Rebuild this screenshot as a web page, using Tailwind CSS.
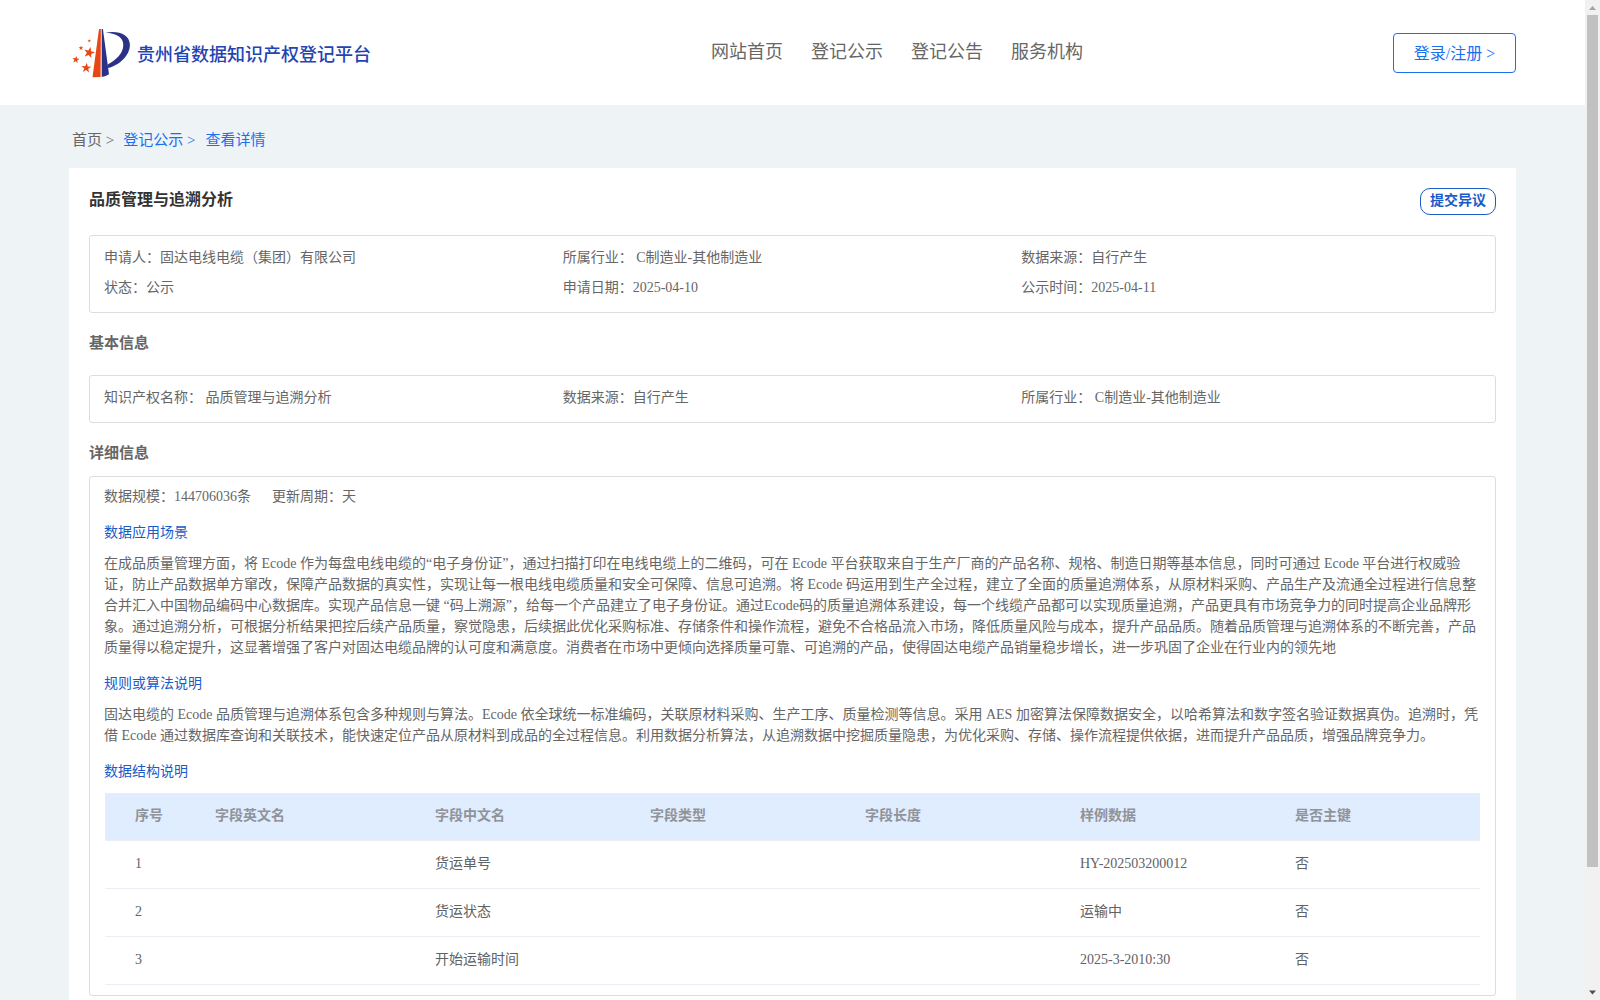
<!DOCTYPE html>
<html lang="zh-CN">
<head>
  <meta charset="UTF-8" />
  <meta name="viewport" content="width=device-width, initial-scale=1.0" />
  <title>贵州省数据知识产权登记平台</title>
  <script src="https://cdn.jsdelivr.net/npm/@tailwindcss/browser@4"></script>
</head>
<body class="h-[1000px] overflow-hidden bg-[#eef3f6] flex font-['Liberation_Serif','Noto_Sans_CJK_SC',serif] text-sm text-[#666]">
  <div class="w-[1585px] h-full overflow-hidden">
    <header class="h-[105px] bg-white pl-[71px] pr-[69px] flex justify-between">
      <div class="w-[640px] pt-[27px] flex">
        <svg class="w-[60px] h-[52px]" viewBox="0 0 60 52">
          <defs>
            <path id="star" d="M0-10 2.4-3.2 9.5-3.1 3.8 1.2 5.9 8.1 0 4 -5.9 8.1 -3.8 1.2 -9.5-3.1 -2.4-3.2z" />
          </defs>
          <g fill="#e64715">
            <path d="M28 2H29.900L29.600 50 21.500 50.200z" />
            <use href="#star" transform="translate(4.9 32.7) rotate(8) scale(.38)" />
            <use href="#star" transform="translate(18.2 25.7) rotate(14) scale(.58)" />
            <use href="#star" transform="translate(15.3 41) rotate(5) scale(.52)" />
            <use href="#star" transform="translate(10 21) scale(.26)" />
            <use href="#star" transform="translate(18.3 13.8) scale(.19)" />
          </g>
          <g fill="#2b3187">
            <path d="M30.700 2H31.900L38 47.300Q35 49.500 30.700 50z" />
            <path d="M34.200 5.600C47 3.200 58.900 7 58.900 18C58.900 28.500 48 38.500 37.200 41L36.700 37.500C45 33 52.300 26.500 52.300 18C52.300 10 45 6.500 34.200 5.600z" />
          </g>
        </svg>
        <h1 class="ml-1.5 h-[56px] leading-[56px] text-lg font-medium text-[#1f45b5] whitespace-nowrap">贵州省数据知识产权登记平台</h1>
      </div>
      <nav class="flex gap-7 w-[682px] pt-[38px] text-lg leading-7">
        <a>网站首页</a>
        <a>登记公示</a>
        <a>登记公告</a>
        <a>服务机构</a>
      </nav>
      <button class="mt-[33px] w-[123px] h-10 pt-px border border-[#1a6ff0] rounded text-base text-[#1a6ff0] whitespace-nowrap shrink-0">登录/注册 &gt;</button>
    </header>

    <div class="h-[63px] pl-[72px] pt-5 text-[15px] leading-[31px] flex gap-[9px]">
      <span>首页 &gt;</span>
      <span class="text-[#1a6ff0]">登记公示 &gt;</span>
      <span class="text-[#1a6ff0] ml-px">查看详情</span>
    </div>

    <main class="ml-[69px] w-[1447px] h-[900px] bg-white px-5 pt-5">
      <div class="flex justify-between h-[47px]">
        <h2 class="text-base leading-6 font-bold text-[#333]">品质管理与追溯分析</h2>
        <button class="w-[76px] h-[27px] pb-[2px] border border-[#1a5bc8] rounded-[10px] text-sm font-bold text-[#1a5bc8]">提交异议</button>
      </div>

      <div class="h-[78px] border border-[#ddd] rounded-[3px] pl-[14px] pt-[7px] grid grid-cols-3 auto-rows-[30px] leading-[30px] pr-[15px]">
        <p>申请人：固达电线电缆（集团）有限公司</p>
        <p>所属行业： C制造业-其他制造业</p>
        <p>数据来源：自行产生</p>
        <p>状态：公示</p>
        <p>申请日期：2025-04-10</p>
        <p>公示时间：2025-04-11</p>
      </div>

      <h3 class="h-[62px] leading-[60px] text-[15px] font-bold">基本信息</h3>
      <div class="h-12 border border-[#ddd] rounded-[3px] pl-[14px] pt-[7px] grid grid-cols-3 leading-[30px] pr-[15px]">
        <p>知识产权名称： 品质管理与追溯分析</p>
        <p>数据来源：自行产生</p>
        <p>所属行业： C制造业-其他制造业</p>
      </div>

      <h3 class="h-[53px] leading-[60px] text-[15px] font-bold">详细信息</h3>
      <div class="h-[520px] border border-[#ddd] rounded-[3px] pl-[14px] pr-4 pt-[5px]">
        <div class="flex gap-[21px] leading-[30px]">
          <span>数据规模：144706036条</span>
          <span>更新周期：天</span>
        </div>
        <h4 class="mt-[5px] leading-[31px] text-[#1a5bc8]">数据应用场景</h4>
        <div class="mt-[5px] leading-[21px]">在成品质量管理方面，将 Ecode 作为每盘电线电缆的“电子身份证”，通过扫描打印在电线电缆上的二维码，可在 Ecode 平台获取来自于生产厂商的产品名称、规格、制造日期等基本信息，同时可通过 Ecode 平台进行权威验证，防止产品数据单方窜改，保障产品数据的真实性，实现让每一根电线电缆质量和安全可保障、信息可追溯。将 Ecode 码运用到生产全过程，建立了全面的质量追溯体系，从原材料采购、产品生产及流通全过程进行信息整合并汇入中国物品编码中心数据库。实现产品信息一键 “码上溯源”，给每一个产品建立了电子身份证。通过Ecode码的质量追溯体系建设，每一个线缆产品都可以实现质量追溯，产品更具有市场竞争力的同时提高企业品牌形象。通过追溯分析，可根据分析结果把控后续产品质量，察觉隐患，后续据此优化采购标准、存储条件和操作流程，避免不合格品流入市场，降低质量风险与成本，提升产品品质。随着品质管理与追溯体系的不断完善，产品质量得以稳定提升，这显著增强了客户对固达电缆品牌的认可度和满意度。消费者在市场中更倾向选择质量可靠、可追溯的产品，使得固达电缆产品销量稳步增长，进一步巩固了企业在行业内的领先地</div>
        <h4 class="mt-[10px] leading-[31px] text-[#1a5bc8]">规则或算法说明</h4>
        <div class="mt-[5px] leading-[21px]">固达电缆的 Ecode 品质管理与追溯体系包含多种规则与算法。Ecode 依全球统一标准编码，关联原材料采购、生产工序、质量检测等信息。采用 AES 加密算法保障数据安全，以哈希算法和数字签名验证数据真伪。追溯时，凭借 Ecode 通过数据库查询和关联技术，能快速定位产品从原材料到成品的全过程信息。利用数据分析算法，从追溯数据中挖掘质量隐患，为优化采购、存储、操作流程提供依据，进而提升产品品质，增强品牌竞争力。</div>
        <h4 class="mt-[10px] leading-[31px] text-[#1a5bc8]">数据结构说明</h4>
        <table class="mt-[6px] w-[1375px] ml-px table-fixed text-left text-[#606266]">
          <colgroup>
            <col class="w-[100px]" />
            <col class="w-[220px]" />
            <col class="w-[215px]" />
            <col class="w-[215px]" />
            <col class="w-[215px]" />
            <col class="w-[215px]" />
            <col class="w-[195px]" />
          </colgroup>
          <thead>
            <tr class="h-[47px] bg-[#e0edff] border-b border-[#ebeef5] text-[#909399]">
              <th class="pl-[30px]">序号</th>
              <th class="pl-[10px]">字段英文名</th>
              <th class="pl-[10px]">字段中文名</th>
              <th class="pl-[10px]">字段类型</th>
              <th class="pl-[10px]">字段长度</th>
              <th class="pl-[10px]">样例数据</th>
              <th class="pl-[10px]">是否主键</th>
            </tr>
          </thead>
          <tbody>
            <tr class="h-12 border-b border-[#ebeef5]">
              <td class="pl-[30px]">1</td>
              <td></td>
              <td class="pl-[10px]">货运单号</td>
              <td></td>
              <td></td>
              <td class="pl-[10px]">HY-202503200012</td>
              <td class="pl-[10px]">否</td>
            </tr>
            <tr class="h-12 border-b border-[#ebeef5]">
              <td class="pl-[30px]">2</td>
              <td></td>
              <td class="pl-[10px]">货运状态</td>
              <td></td>
              <td></td>
              <td class="pl-[10px]">运输中</td>
              <td class="pl-[10px]">否</td>
            </tr>
            <tr class="h-12 border-b border-[#ebeef5]">
              <td class="pl-[30px]">3</td>
              <td></td>
              <td class="pl-[10px]">开始运输时间</td>
              <td></td>
              <td></td>
              <td class="pl-[10px]">2025-3-2010:30</td>
              <td class="pl-[10px]">否</td>
            </tr>
          </tbody>
        </table>
      </div>
    </main>
  </div>

  <!-- scrollbar -->
  <div class="w-[15px] h-full bg-[#f1f1f1] flex flex-col items-center justify-between">
    <svg class="w-[15px] h-[15px]" viewBox="0 0 15 15"><path d="M4 10 7.500 6 11 10z" fill="#a3a3a3" /></svg>
    <div class="w-[11px] h-[852px] bg-[#c1c1c1]"></div>
    <div class="flex-1"></div>
    <svg class="w-[15px] h-[15px]" viewBox="0 0 15 15"><path d="M4 5.500 7.500 9.500 11 5.500z" fill="#505050" /></svg>
  </div>
</body>
</html>
